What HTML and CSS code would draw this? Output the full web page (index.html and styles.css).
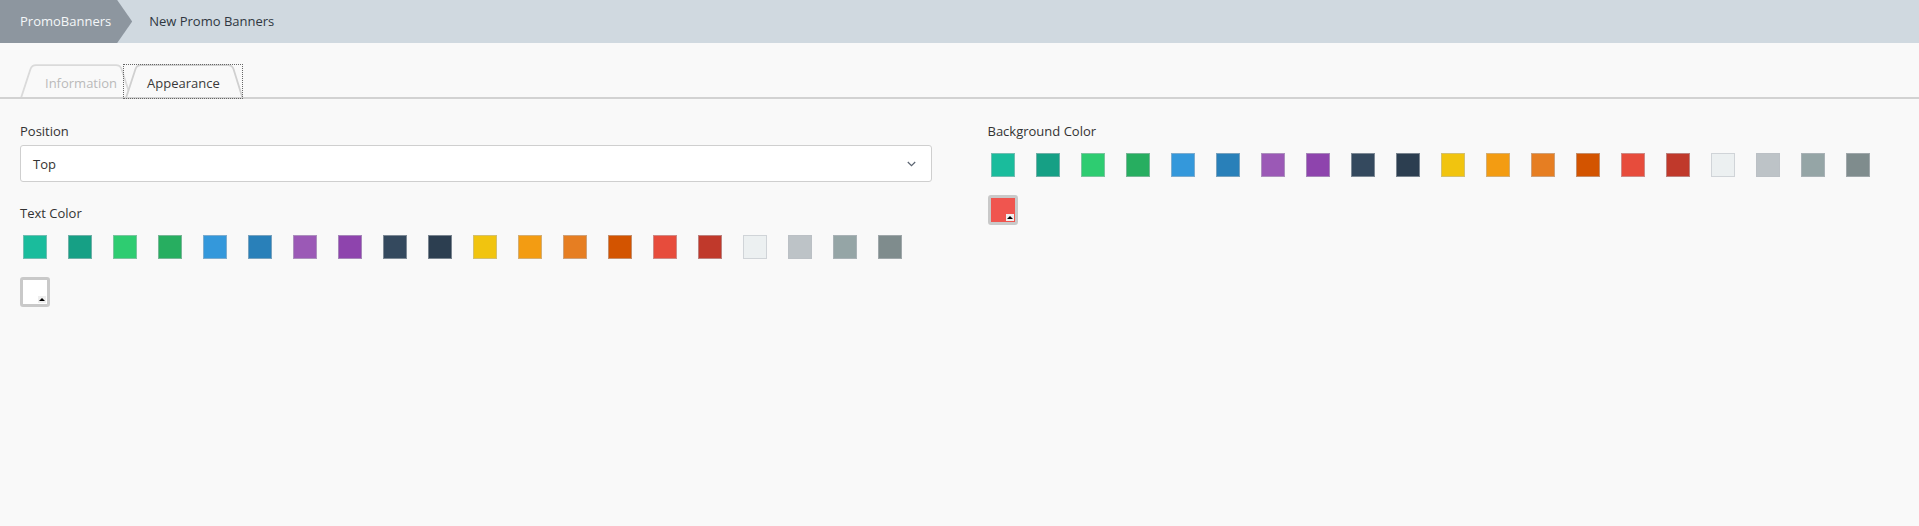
FILE: index.html
```html
<!DOCTYPE html>
<html lang="en">
<head>
<meta charset="utf-8">
<title>New Promo Banners</title>
<link rel="stylesheet" href="styles.css">
</head>
<body>
<header class="crumbs">
  <span class="crumb crumb-root">PromoBanners</span>
  <span class="crumb crumb-current">New Promo Banners</span>
</header>

<nav class="tabs">
  <div class="tab tab-info">
    <svg class="tab-shape" width="113" height="33" viewBox="0 0 113 33"><path d="M1,34 L10.5,5 Q12,1.2 16,1.2 L96,1.2 Q100,1.2 101.5,5 L111,34" fill="#f9f9f9" stroke="#dadada" stroke-width="1.8"/></svg>
    <span class="tab-label">Information</span>
  </div>
  <div class="tab tab-active">
    <svg class="tab-shape" width="120" height="33" viewBox="0 0 120 33"><path d="M3,34 L12.5,5 Q14,1.2 18,1.2 L105,1.2 Q109,1.2 110.5,5 L119.5,34" fill="#f9f9f9" stroke="#d0d0d0" stroke-width="1.8"/></svg>
    <span class="tab-label">Appearance</span>
    <span class="focus-ring"></span>
  </div>
</nav>

<main class="form">
  <section class="col">
    <div class="group">
      <label class="label">Position</label>
      <div class="select">
        <span>Top</span>
        <svg class="chev" width="9" height="6" viewBox="0 0 9 6"><path d="M0.8,1 L4.5,4.6 L8.2,1" fill="none" stroke="#5a6370" stroke-width="1.2"/></svg>
      </div>
    </div>
    <div class="group">
      <label class="label">Text Color</label>
      <div class="swatches">
        <span class="sw"><i style="background:#1abc9c"></i></span>
        <span class="sw"><i style="background:#16a085"></i></span>
        <span class="sw"><i style="background:#2ecc71"></i></span>
        <span class="sw"><i style="background:#27ae60"></i></span>
        <span class="sw"><i style="background:#3498db"></i></span>
        <span class="sw"><i style="background:#2980b9"></i></span>
        <span class="sw"><i style="background:#9b59b6"></i></span>
        <span class="sw"><i style="background:#8e44ad"></i></span>
        <span class="sw"><i style="background:#34495e"></i></span>
        <span class="sw"><i style="background:#2c3e50"></i></span>
        <span class="sw"><i style="background:#f1c40f"></i></span>
        <span class="sw"><i style="background:#f39c12"></i></span>
        <span class="sw"><i style="background:#e67e22"></i></span>
        <span class="sw"><i style="background:#d35400"></i></span>
        <span class="sw"><i style="background:#e74c3c"></i></span>
        <span class="sw"><i style="background:#c0392b"></i></span>
        <span class="sw"><i style="background:#ecf0f1"></i></span>
        <span class="sw"><i style="background:#bdc3c7"></i></span>
        <span class="sw"><i style="background:#95a5a6"></i></span>
        <span class="sw"><i style="background:#7f8c8d"></i></span>
        <span class="picker"><i style="background:#ffffff"></i><b class="caret"></b></span>
      </div>
    </div>
  </section>

  <section class="col">
    <div class="group">
      <label class="label">Background Color</label>
      <div class="swatches">
        <span class="sw"><i style="background:#1abc9c"></i></span>
        <span class="sw"><i style="background:#16a085"></i></span>
        <span class="sw"><i style="background:#2ecc71"></i></span>
        <span class="sw"><i style="background:#27ae60"></i></span>
        <span class="sw"><i style="background:#3498db"></i></span>
        <span class="sw"><i style="background:#2980b9"></i></span>
        <span class="sw"><i style="background:#9b59b6"></i></span>
        <span class="sw"><i style="background:#8e44ad"></i></span>
        <span class="sw"><i style="background:#34495e"></i></span>
        <span class="sw"><i style="background:#2c3e50"></i></span>
        <span class="sw"><i style="background:#f1c40f"></i></span>
        <span class="sw"><i style="background:#f39c12"></i></span>
        <span class="sw"><i style="background:#e67e22"></i></span>
        <span class="sw"><i style="background:#d35400"></i></span>
        <span class="sw"><i style="background:#e74c3c"></i></span>
        <span class="sw"><i style="background:#c0392b"></i></span>
        <span class="sw"><i style="background:#ecf0f1"></i></span>
        <span class="sw"><i style="background:#bdc3c7"></i></span>
        <span class="sw"><i style="background:#95a5a6"></i></span>
        <span class="sw"><i style="background:#7f8c8d"></i></span>
        <span class="picker"><i style="background:#f0554f"></i><b class="caret"></b></span>
      </div>
    </div>
  </section>
</main>
</body>
</html>
```

FILE: styles.css
```css
* { box-sizing: border-box; }

html, body {
  margin: 0;
  padding: 0;
  background: #f9f9f9;
  font-family: "Open Sans", "Noto Sans", "Liberation Sans", sans-serif;
  font-size: 13px;
  color: #333;
}

/* breadcrumb header */
.crumbs {
  display: flex;
  align-items: center;
  height: 43px;
  background: #d0d9e0;
}
.crumb {
  line-height: 43px;
  white-space: nowrap;
}
.crumb-root {
  background: #8d969f;
  color: #f4f6f8;
  padding: 0 21px 0 20px;
  clip-path: polygon(0 0, calc(100% - 15px) 0, 100% 50%, calc(100% - 15px) 100%, 0 100%);
}
.crumb-current {
  margin-left: 17px;
  color: #2f3740;
}

/* tabs */
.tabs {
  display: flex;
  margin-top: 21px;
  padding-left: 20px;
  border-bottom: 2px solid #d2d2d2;
  height: 35px;
}
.tab {
  position: relative;
  height: 33px;
  display: flex;
  align-items: center;
  padding-top: 5px;
}
.tab-shape {
  position: absolute;
  left: 0;
  top: 0;
  z-index: 0;
}
.tab-label {
  position: relative;
  z-index: 1;
}
.tab-info {
  width: 113px;
  padding-left: 25px;
  color: #b9b9b9;
}
.tab-active {
  width: 120px;
  margin-left: -10px;
  padding-left: 24px;
  color: #3a3a3a;
  z-index: 2;
}
.focus-ring {
  position: absolute;
  left: 0;
  top: 0;
  right: 0;
  bottom: -2px;
  border: 1px dotted #666;
  z-index: 3;
  pointer-events: none;
}

/* form */
.form {
  display: grid;
  grid-template-columns: 1fr 1fr;
  column-gap: 56px;
  padding: 23px 20px 0;
}
.group {
  margin-bottom: 22px;
}
.label {
  display: block;
  line-height: 18px;
  margin-bottom: 5px;
  color: #333;
}
.select {
  display: flex;
  align-items: center;
  justify-content: space-between;
  height: 37px;
  padding: 0 15px 0 12px;
  background: #fff;
  border: 1px solid #cfcfcf;
  border-radius: 3px;
  color: #333;
}
.chev { display: block; }

.swatches {
  display: flex;
  flex-wrap: wrap;
  column-gap: 15px;
  row-gap: 15px;
  padding-top: 5px;
}
.sw {
  width: 30px;
  height: 30px;
  padding: 3px;
}
.sw i {
  display: block;
  width: 24px;
  height: 24px;
  border: 1px solid rgba(185, 190, 195, 0.55);
}
.picker {
  position: relative;
  width: 30px;
  height: 30px;
  border: 3px solid #c9c9c9;
  border-radius: 3px;
  background: #fff;
}
.picker i {
  display: block;
  width: 24px;
  height: 24px;
}
.caret {
  position: absolute;
  right: 1px;
  bottom: 1px;
  width: 8px;
  height: 7px;
  background: #eeeeee;
}
.caret::after {
  content: "";
  position: absolute;
  left: 1px;
  top: 2px;
  border-left: 3px solid transparent;
  border-right: 3px solid transparent;
  border-bottom: 3.5px solid #000;
}
```
